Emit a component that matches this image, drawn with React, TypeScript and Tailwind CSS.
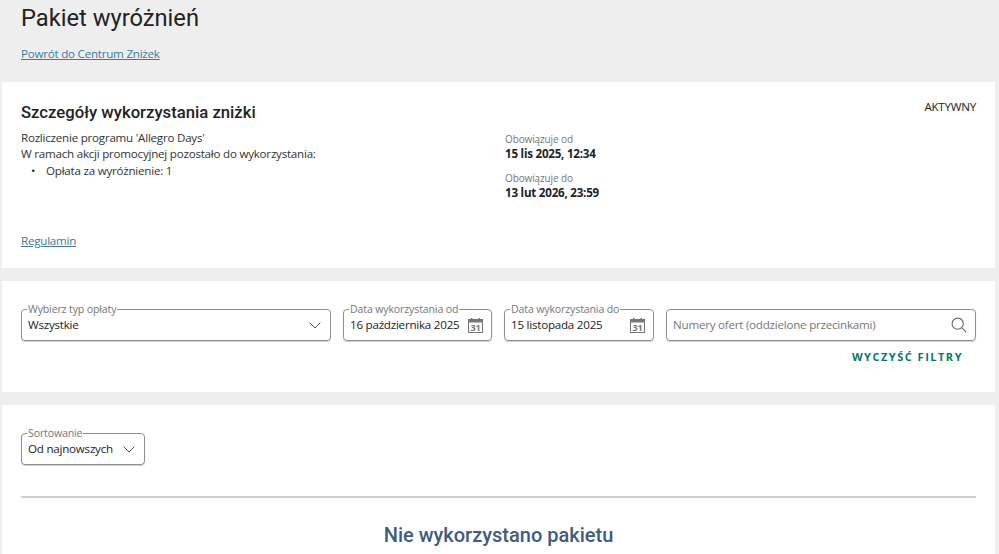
const Chevron = () => (
  <svg width="12" height="7" viewBox="0 0 12 7" fill="none" stroke="#555" strokeWidth="1" className="shrink-0">
    <path d="M0.7 0.7 L6 6 L11.3 0.7" />
  </svg>
);

const CalendarIcon = () => (
  <svg width="15" height="15" viewBox="0 0 15 15" fill="none" className="shrink-0 -translate-x-px">
    <rect x="0.5" y="1.5" width="14" height="13" stroke="#777" strokeWidth="1" fill="#fff" />
    <rect x="0.5" y="1.5" width="14" height="3" fill="#777" />
    <rect x="3" y="0" width="1.5" height="3" fill="#777" />
    <rect x="10.5" y="0" width="1.5" height="3" fill="#777" />
    <text x="7.5" y="13.2" textAnchor="middle" fontSize="9" fontWeight="700" fontFamily="Open Sans, sans-serif" fill="#777">31</text>
  </svg>
);

const SearchIcon = () => (
  <svg width="16" height="16" viewBox="0 0 16 16" fill="none" stroke="#666" strokeWidth="1.1" className="shrink-0">
    <circle cx="6.7" cy="6.7" r="5.6" />
    <path d="M10.8 10.8 L15.2 15.2" />
  </svg>
);

const Field = ({ label, value, width, pad, icon }: { label: string; value: string; width: string; pad: string; icon: React.ReactNode }) => (
  <fieldset className={`${width} ${pad} min-w-0 h-[39px] border border-[#8f8f8f] rounded-[4px] pl-[6px] shadow-[0_1px_1px_rgba(0,0,0,0.2)]`}>
    <legend className="-ml-px text-[10.6px] tracking-[-0.15px] leading-[14px] text-[#76767a] px-px whitespace-nowrap">{label}</legend>
    <div className="flex items-center justify-between h-[22px] -mt-[2px] text-[11.6px] tracking-[-0.23px] text-[#222]">
      <span className="whitespace-nowrap">{value}</span>
      {icon}
    </div>
  </fieldset>
);

export default function App() {
  return (
    <div className="w-[999px] h-[554px] overflow-hidden bg-[#eeeeee] font-['Open_Sans',sans-serif]">
      <div className="pl-[21px] h-[82px]">
        <h1 className="font-['Roboto',sans-serif] text-[23.7px] leading-[28px] text-[#222] pt-[4px]">Pakiet wyróżnień</h1>
        <a className="block mt-[14px] text-[11.6px] tracking-[-0.23px] leading-[16px] text-[#3b7aa3] underline">Powrót do Centrum Zniżek</a>
      </div>

      <div className="ml-[2px] w-[993px] h-[186px] bg-white px-[19px] pt-[20px] flex flex-col">
        <div className="flex justify-between">
          <h2 className="font-['Roboto',sans-serif] font-medium text-[16.7px] leading-[21px] text-[#222]">Szczegóły wykorzystania zniżki</h2>
          <span className="text-[11.6px] tracking-[-0.23px] leading-[16px] text-[#222] -mt-[3px]">AKTYWNY</span>
        </div>
        <div className="flex mt-[7px]">
          <div className="w-[484px] text-[11.6px] tracking-[-0.23px] leading-[16.4px] text-[#333]">
            <p>Rozliczenie programu 'Allegro Days'</p>
            <p>W ramach akcji promocyjnej pozostało do wykorzystania:</p>
            <ul>
              <li className="flex">
                <span className="w-[25px] pl-[10px]">•</span>
                <span>Opłata za wyróżnienie: 1</span>
              </li>
            </ul>
          </div>
          <div className="text-[11.6px] tracking-[-0.23px] leading-[15px] pt-px">
            <div className="text-[10px] tracking-[-0.12px] leading-[17px] text-[#76767a]">Obowiązuje od</div>
            <div className="font-bold -mt-[2px] text-[#222]">15 lis 2025, 12:34</div>
            <div className="text-[10px] tracking-[-0.12px] leading-[17px] text-[#76767a] mt-[9px]">Obowiązuje do</div>
            <div className="font-bold -mt-[2px] text-[#222]">13 lut 2026, 23:59</div>
          </div>
        </div>
        <a className="mt-auto mb-[19px] text-[11.6px] tracking-[-0.23px] leading-[16px] text-[#3b7aa3] underline">Regulamin</a>
      </div>

      <div className="ml-[2px] mt-[13px] w-[993px] h-[111px] bg-white pl-[19px] pt-[21px]">
        <div className="flex gap-[12px]">
          <Field label="Wybierz typ opłaty" value="Wszystkie" width="w-[310px]" pad="pr-[9px]" icon={<Chevron />} />
          <Field label="Data wykorzystania od" value="16 października 2025" width="w-[149px]" pad="pr-[7px]" icon={<CalendarIcon />} />
          <Field label="Data wykorzystania do" value="15 listopada 2025" width="w-[150px]" pad="pr-[7px]" icon={<CalendarIcon />} />
          <div className="w-[310px] h-[32px] mt-[7px] border border-[#8f8f8f] rounded-[4px] pl-[6px] pr-[8px] flex items-center justify-between shadow-[0_1px_1px_rgba(0,0,0,0.2)]">
            <span className="text-[11.6px] tracking-[-0.23px] text-[#76767a] whitespace-nowrap">Numery ofert (oddzielone przecinkami)</span>
            <SearchIcon />
          </div>
        </div>
        <div className="flex justify-end pr-[32px] mt-[8px]">
          <button className="text-[11px] leading-[16px] font-bold tracking-[1.5px] text-[#00796b]">WYCZYŚĆ FILTRY</button>
        </div>
      </div>

      <div className="ml-[2px] mt-[13px] w-[993px] h-[149px] bg-white px-[19px] pt-[21px]">
        <Field label="Sortowanie" value="Od najnowszych" width="w-[124px]" pad="pr-[9px]" icon={<Chevron />} />
        <div className="h-[2px] bg-[#cfcfcf] mt-[31px]"></div>
        <h3 className="font-['Roboto',sans-serif] font-medium text-[20px] leading-[24px] text-[#3f5b7e] text-center mt-[25px]">Nie wykorzystano pakietu</h3>
      </div>
    </div>
  );
}
